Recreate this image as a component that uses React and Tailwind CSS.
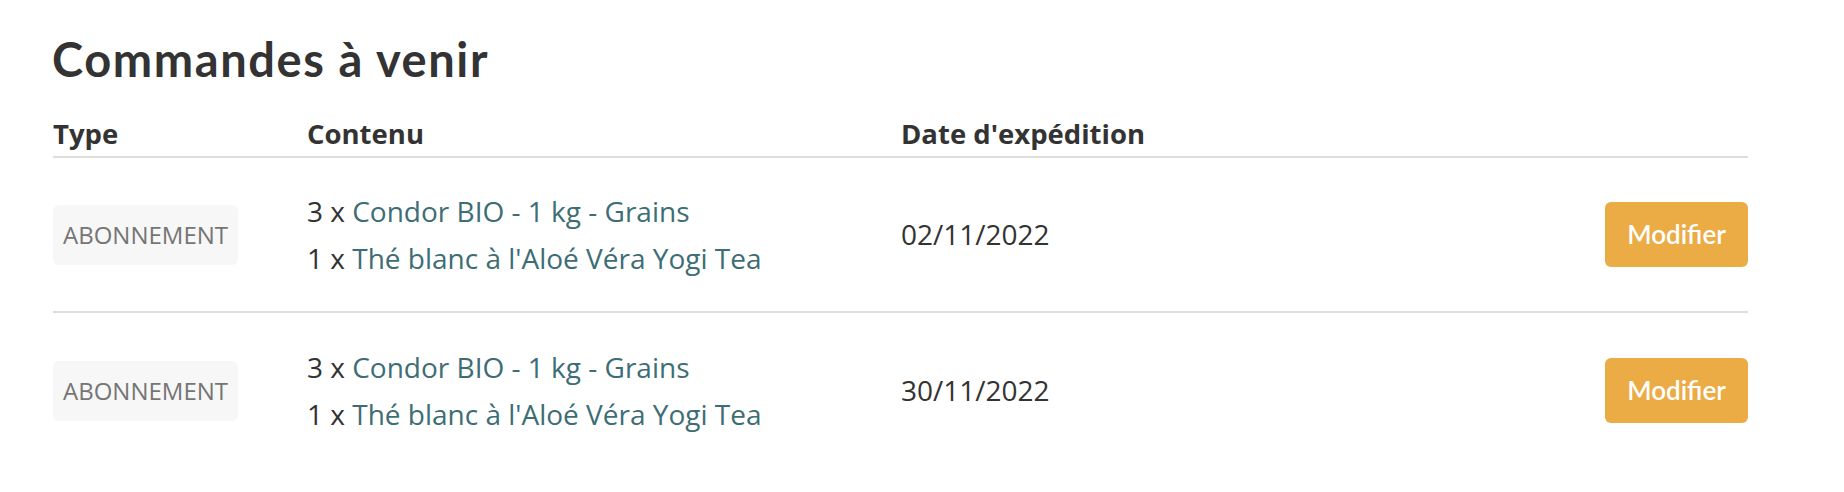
const orders = [
  {
    type: "ABONNEMENT",
    items: [
      { qty: 3, name: "Condor BIO - 1 kg - Grains" },
      { qty: 1, name: "Thé blanc à l'Aloé Véra Yogi Tea" },
    ],
    date: "02/11/2022",
  },
  {
    type: "ABONNEMENT",
    items: [
      { qty: 3, name: "Condor BIO - 1 kg - Grains" },
      { qty: 1, name: "Thé blanc à l'Aloé Véra Yogi Tea" },
    ],
    date: "30/11/2022",
  },
];

export default function App() {
  return (
    <div className="min-h-screen bg-white pl-[53px] pr-[96px] pt-[31px] font-['Open_Sans',sans-serif] text-[#333]">
      <h2 className="font-['Lato',sans-serif] text-[47px] font-bold leading-[56px] tracking-[1.6px] text-[#333] -ml-[1px]">
        Commandes à venir
      </h2>

      <div className="mt-[29px]">
        <div className="grid grid-cols-[254px_594px_1fr_auto] border-b-2 border-[#dddddd] pb-[4px] text-[27.5px] font-bold leading-[36px] text-[#333]">
          <div>Type</div>
          <div>Contenu</div>
          <div>Date d'expédition</div>
          <div></div>
        </div>

        {orders.map((order, i) => (
          <div
            key={i}
            className={
              i < orders.length - 1
                ? "grid h-[155px] grid-cols-[254px_594px_1fr_auto] items-center border-b-2 border-[#dddddd]"
                : "grid h-[155px] grid-cols-[254px_594px_1fr_auto] items-center"
            }
          >
            <div>
              <span className="inline-flex h-[60px] items-center rounded-[6px] bg-[#f7f7f7] px-[10px] text-[24px] text-[#757575]">
                {order.type}
              </span>
            </div>
            <div className="text-[28px] leading-[47px]">
              {order.items.map((item, j) => (
                <div key={j}>
                  {item.qty} x <a href="#" className="text-[#3d6d75]">{item.name}</a>
                </div>
              ))}
            </div>
            <div className="text-[28px] leading-[47px]">{order.date}</div>
            <div className="justify-self-end">
              <button className="flex h-[65px] w-[143px] items-center justify-center rounded-[6px] bg-[#ebab45] font-['Lato',sans-serif] text-[26px] font-semibold text-white">
                Modifier
              </button>
            </div>
          </div>
        ))}
      </div>
    </div>
  );
}
